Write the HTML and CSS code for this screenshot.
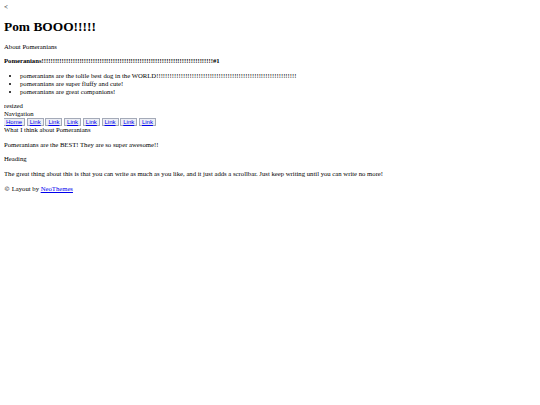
FILE: index.html
```html
<!DOCTYPE html>
<html>
<head>
<meta charset="utf-8">
<link rel="stylesheet" href="styles.css">
</head>
<body>
<div class="back">&lt;</div>
<h1 class="title">Pom BOOO!!!!!</h1>
<p>About Pomeranians</p>
<p class="sub">Pomeranians!!!!!!!!!!!!!!!!!!!!!!!!!!!!!!!!!!!!!!!!!!!!!!!!!!!!!!!!!!!!!!!!!!!!!!!!!!!!!#1</p>
<ul class="list">
<li>pomeranians are the tolile best dog in the WORLD!!!!!!!!!!!!!!!!!!!!!!!!!!!!!!!!!!!!!!!!!!!!!!!!!!!!!!!!!!!!!!!</li>
<li>pomeranians are super fluffy and cute!</li>
<li>pomeranians are great companions!</li>
</ul>
<div class="line">resized</div>
<div class="line">Navigation</div>
<nav class="nav">
<a class="btn" href="#">Home</a>
<a class="btn" href="#">Link</a>
<a class="btn" href="#">Link</a>
<a class="btn" href="#">Link</a>
<a class="btn" href="#">Link</a>
<a class="btn" href="#">Link</a>
<a class="btn" href="#">Link</a>
<a class="btn" href="#">Link</a>
</nav>
<div class="line">What I think about Pomeranians</div>
<p>Pomeranians are the BEST! They are so super awesome!!</p>
<p>Heading</p>
<p>The great thing about this is that you can write as much as you like, and it just adds a scrollbar. Just keep writing until you can write no more!</p>
<p><span class="copy">&copy;</span> Layout by <a class="link" href="#">NeoThemes</a></p>
</body>
</html>
```
FILE: styles.css
```css
html, body {
  background: #ffffff;
}
body {
  margin: 3px 4px 4px;
  font-family: "Liberation Serif", "Times New Roman", serif;
  font-size: 6.7px;
  line-height: 8px;
  color: #000000;
}
.title {
  font-size: 13.4px;
  line-height: 16px;
  font-weight: bold;
  margin: 8px 0 7.5px;
}
p {
  margin: 6.6px 0;
}
.sub {
  font-weight: bold;
}
.list {
  margin: 6.6px 0;
  padding-left: 16px;
}
.nav {
  display: flex;
  gap: 1.7px;
  margin-left: -1px;
}
.btn {
  font-family: "Liberation Sans", Arial, sans-serif;
  font-size: 6px;
  line-height: 6px;
  color: #0000ee;
  text-decoration: underline;
  background: #eceef4;
  border: 1px solid #a4aab8;
  padding: 0 2px;
}
.copy {
  font-family: "DejaVu Serif", serif;
  font-size: 6px;
}
.link {
  color: #0000ee;
}
```
